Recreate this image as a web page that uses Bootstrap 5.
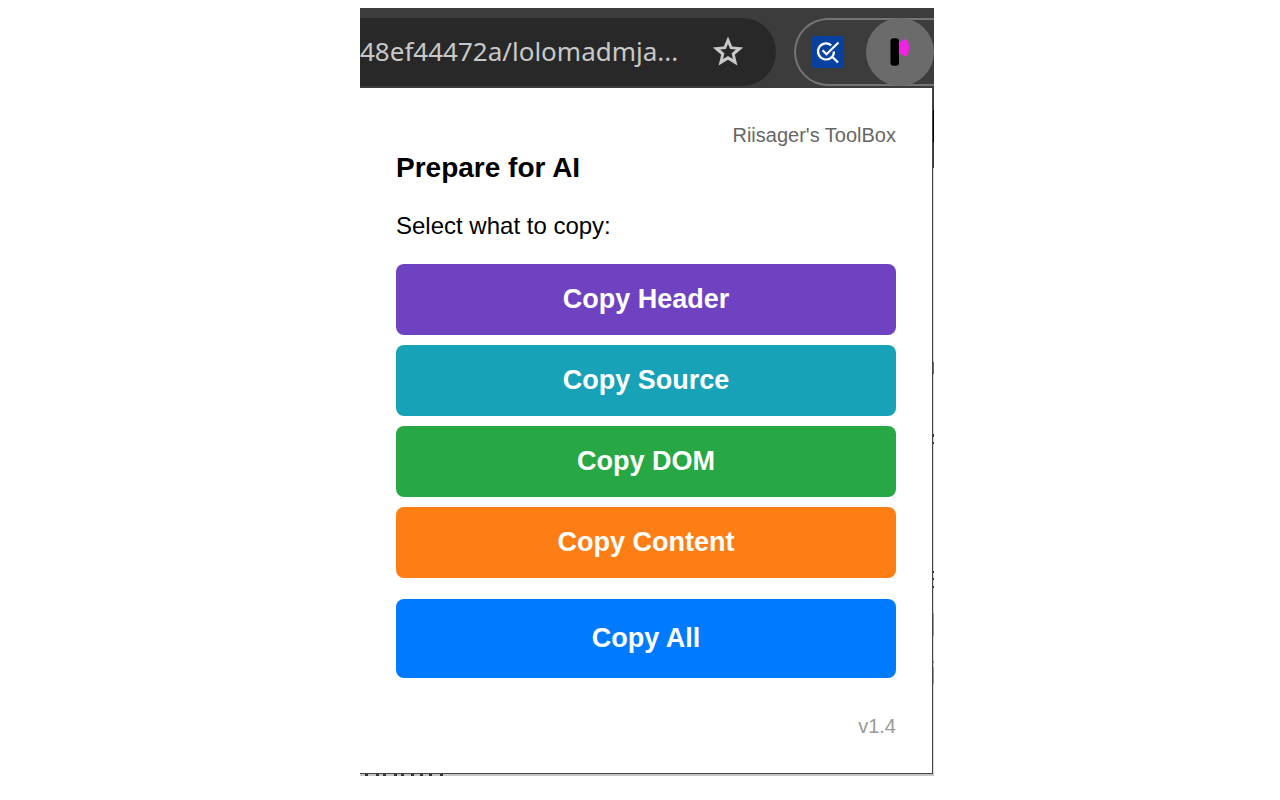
<!DOCTYPE html>
<html lang="en">
<head>
<meta charset="utf-8">
<meta name="viewport" content="width=device-width, initial-scale=1">
<title>Prepare for AI</title>
<link href="https://cdn.jsdelivr.net/npm/bootstrap@5.3.0/dist/css/bootstrap.min.css" rel="stylesheet">
<style>
  body { background: #fff; color: #000; font-family: "Liberation Sans", Arial, sans-serif; }
  .shot { max-width: 588px; padding: 8px 0 8px 14px; }
  .browser-bar { background: #3c3c3c; height: 80px; padding-top: 10px; }
  .address { background: #282828; color: #c8c8c8; height: 68px; border-radius: 0 34px 34px 0; padding-right: 32px; margin-right: 18px; }
  .address-url { font: 26px/36px "Noto Sans", "Open Sans", sans-serif; white-space: nowrap; padding-bottom: 2px; }
  .extensions { width: 140px; height: 68px; border: 2px solid #747474; border-right: 0; border-radius: 34px 0 0 34px; padding-left: 16px; }
  .plain { background: none; border: 0; padding: 0; line-height: 0; }
  .ext-active { width: 68px; height: 68px; border-radius: 50%; background: #6b6b6b; }
  .popup { border-right: 1px solid #444; border-bottom: 1px solid #444; padding: 35px 36px 34px; background: #fff; }
  .brand-line { font-size: 20px; line-height: 24px; color: #666; }
  .title { font-size: 28px; line-height: 32px; margin: 5px 0 28px; }
  .hint { font-size: 24px; line-height: 28px; margin-bottom: 24px; }
  .copy { --bs-btn-color: #fff; --bs-btn-hover-color: #fff; --bs-btn-active-color: #fff; border: 0; border-radius: 8px; height: 71px; font-size: 27px; line-height: 30px; font-weight: 700; padding: 0 0 2px; }
  .copy-header, .copy-header:hover { background: #6f42c1; }
  .copy-source, .copy-source:hover { background: #17a2b8; }
  .copy-dom, .copy-dom:hover { background: #28a745; }
  .copy-content, .copy-content:hover { background: #fd7e14; }
  .copy-all, .copy-all:hover { background: #007bff; height: 79px; margin-top: 11px; }
  .stack { gap: 10px; }
  .version { font-size: 20px; line-height: 24px; color: #999; margin-top: 36px; }
  .edge { width: 1px; }
  .under { height: 2px; background: #c6c6c6; }
</style>
</head>
<body>
<main class="shot mx-auto">
  <header class="browser-bar d-flex overflow-hidden">
    <div class="address d-flex align-items-center justify-content-between flex-grow-1">
      <span class="address-url">48ef44472a/lolomadmja...</span>
      <button class="plain" type="button" aria-label="Bookmark this tab">
        <svg width="32" height="32" viewBox="0 0 32 32" fill="#c8c8c8" fill-rule="evenodd"><path d="M16 .5l4.200 10.100 11 .9-8.400 7.200 2.600 10.800L16 23.800 6.600 29.500l2.600-10.800L.8 11.500l11-.9zM16 7.800l-2.200 5.300-5.700.5 4.300 3.700-1.300 5.600 4.900-3 4.900 3-1.300-5.600 4.300-3.700-5.700-.5z"/></svg>
      </button>
    </div>
    <div class="extensions d-flex align-items-center flex-shrink-0">
      <button class="plain" type="button" aria-label="Search check">
        <svg width="32" height="32" viewBox="0 0 32 32"><rect width="32" height="32" rx="3" fill="#0842a0"/><g fill="none" stroke="#fff" stroke-width="2.200"><path d="M19.200 9.400A8 8 0 1 0 22 15.500M19.500 20l6.500 6.500"/><path d="M10.500 14.200l4 4L26.500 6.500"/></g></svg>
      </button>
      <button class="plain ext-active d-flex align-items-center justify-content-center ms-auto" type="button" aria-label="Prepare for AI">
        <svg width="68" height="68" viewBox="0 0 68 68"><rect x="24.500" y="20.300" width="8.500" height="27.500" rx="3" fill="#000"/><path d="M33 24q4-1 6.500-3.500Q43 24 43 30t-3.500 9Q37 36 33 35.500z" fill="#f423e4"/></svg>
      </button>
    </div>
  </header>
  <div class="d-flex">
    <section class="popup flex-grow-1">
      <div class="brand-line text-end">Riisager's ToolBox</div>
      <h1 class="title fw-bold">Prepare for AI</h1>
      <p class="hint">Select what to copy:</p>
      <div class="stack d-grid">
        <button type="button" class="btn copy copy-header">Copy Header</button>
        <button type="button" class="btn copy copy-source">Copy Source</button>
        <button type="button" class="btn copy copy-dom">Copy DOM</button>
        <button type="button" class="btn copy copy-content">Copy Content</button>
        <button type="button" class="btn copy copy-all">Copy All</button>
      </div>
      <div class="version text-end">v1.4</div>
    </section>
    <svg class="edge flex-shrink-0" viewBox="0 0 1 686" preserveAspectRatio="none" aria-hidden="true">
      <path fill="#d8d8d8" d="M0 0h1v686H0z"/><path fill="#3c3c3c" d="M0 0h1v80H0z"/><path fill="#000" d="M0 22h1v32H0z"/>
      <path fill="#3272d0" d="M0 274h1v12H0z"/><path fill="#333" d="M0 346h1v3H0zM0 354h1v2H0zM0 483h1v2H0zM0 490h1v2H0zM0 498h1v2H0z"/><path fill="#999" d="M0 525h1v23H0zM0 573h1v2H0zM0 579h1v17H0z"/>
    </svg>
  </div>
  <div class="under d-flex"><svg width="90" height="2" viewBox="0 0 90 2" aria-hidden="true"><path fill="#333" d="M5 0h3v2H5zM16 0h3v2h-3zM23 0h3v2h-3zM34 0h3v2h-3zM41 0h3v2h-3zM51 0h3v2h-3zM60 0h3v2h-3zM69 0h3v2h-3zM80 0h3v2h-3z"/></svg></div>
</main>
<script src="https://cdn.jsdelivr.net/npm/bootstrap@5.3.0/dist/js/bootstrap.bundle.min.js"></script>
</body>
</html>
